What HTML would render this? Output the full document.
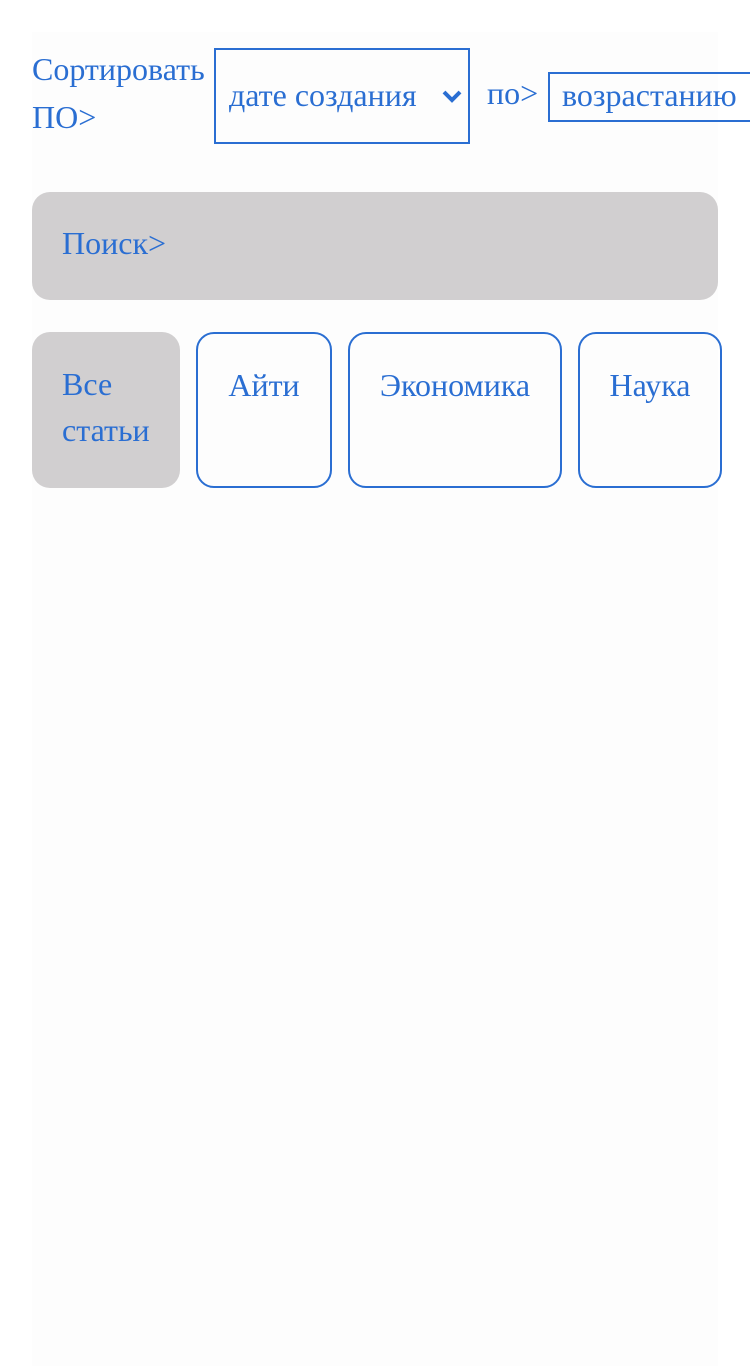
<!DOCTYPE html>
<html><head><meta charset="utf-8"><style>
body{margin:0;background:#fff;width:750px;height:1366px;overflow:hidden;font-family:"Liberation Serif",serif;color:#2a6ed2;}
.c{position:absolute;left:32px;top:32px;width:686px;height:1334px;background:#fdfdfd;}
.a{position:absolute;font-size:32px;line-height:48px;white-space:nowrap;}
.box{position:absolute;border:2px solid #2a6ed2;box-sizing:border-box;}
.t{position:absolute;box-sizing:border-box;border-radius:18px;font-size:32px;line-height:46px;}
</style></head><body>
<div class="c"></div>
<div class="a" style="left:32px;top:45px">Сортировать<br>ПО&gt;</div>
<div class="box" style="left:214px;top:48px;width:256px;height:96px"></div>
<div class="a" style="left:229px;top:71px">дате создания</div>
<svg style="position:absolute;left:441px;top:88px" width="22" height="16" viewBox="0 0 22 16"><path d="M3 4 L11 12 L19 4" fill="none" stroke="#2a6ed2" stroke-width="4"/></svg>
<div class="a" style="left:487px;top:69px">по&gt;</div>
<div class="box" style="left:548px;top:72px;width:210px;height:50px"></div>
<div class="a" style="left:562px;top:71px">возрастанию</div>
<div class="t" style="left:32px;top:192px;width:686px;height:108px;background:#d1cfd0;padding:28px 30px">Поиск&gt;</div>
<div class="t" style="left:32px;top:332px;width:148px;height:156px;background:#d1cfd0;padding:29px 30px">Все<br>статьи</div>
<div class="t" style="left:196px;top:332px;width:136px;height:156px;border:2px solid #2a6ed2;padding:28px 0;text-align:center">Айти</div>
<div class="t" style="left:348px;top:332px;width:214px;height:156px;border:2px solid #2a6ed2;padding:28px 0;text-align:center">Экономика</div>
<div class="t" style="left:578px;top:332px;width:144px;height:156px;border:2px solid #2a6ed2;padding:28px 0;text-align:center">Наука</div>
</body></html>
